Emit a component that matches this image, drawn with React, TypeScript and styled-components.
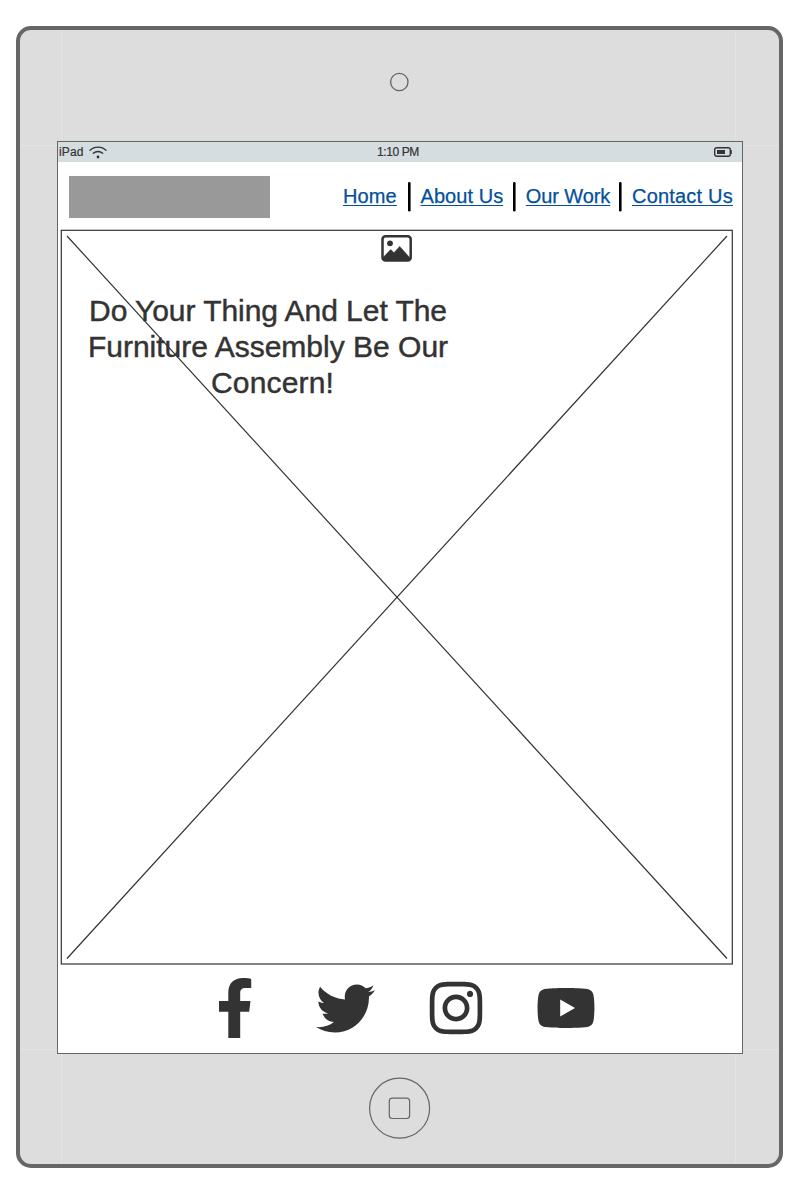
import React from "react";
import styled, { createGlobalStyle } from "styled-components";
import { FaInstagram, FaTwitter, FaYoutube } from "react-icons/fa6";

const ink = "#333333";
const bezel = "#666666";

const GlobalStyle = createGlobalStyle`
  *, *::before, *::after { box-sizing: border-box; }
  body {
    margin: 0;
    background: #ffffff;
    color: ${ink};
    font-family: "Liberation Sans", Arial, sans-serif;
  }
`;

const Page = styled.main`
  width: 798px;
  height: 1181px;
  padding: 26px 15px 0 16px;
  overflow: hidden;
`;

const seam = "linear-gradient(#e3e3e3, #e3e3e3)";

const Device = styled.div`
  display: flex;
  flex-direction: column;
  align-items: center;
  width: 767px;
  height: 1142px;
  border: 4px solid ${bezel};
  border-radius: 15px;
  background:
    ${seam} 41px 0 / 1px 100% no-repeat,
    ${seam} 715px 0 / 1px 100% no-repeat,
    ${seam} 0 115px / 100% 1px no-repeat,
    ${seam} 0 1019px / 100% 1px no-repeat,
    #dddddd;
`;

const TopBezel = styled.div`
  display: flex;
  justify-content: center;
  height: 111px;
  padding-top: 42px;
`;

const BottomBezel = styled.div`
  display: flex;
  justify-content: center;
  padding-top: 23px;
`;

const Screen = styled.div`
  flex: none;
  display: flex;
  flex-direction: column;
  width: 686px;
  height: 913px;
  margin-left: 1px;
  border: 1px solid ${bezel};
  background: #ffffff;
`;

const StatusBar = styled.div`
  display: grid;
  grid-template-columns: 1fr auto 1fr;
  align-items: center;
  height: 20px;
  padding: 0 10px 0 1px;
  background: #d6dde0;
  font-size: 12px;
  line-height: 20px;
  -webkit-text-stroke: 0.2px currentColor;
`;

const Carrier = styled.div`
  display: flex;
  align-items: center;
  gap: 5.5px;
  letter-spacing: 0.15px;
`;

const Clock = styled.time`
  margin-left: 5px;
  letter-spacing: -0.4px;
`;

const BatterySlot = styled.div`
  display: flex;
  justify-content: flex-end;
`;

const Header = styled.header`
  display: flex;
  justify-content: space-between;
  height: 67px;
  padding: 14px 9px 0 11px;
`;

const LogoPlaceholder = styled.div`
  width: 201px;
  height: 42px;
  background: #999999;
`;

const Nav = styled.nav`
  display: flex;
  height: 30px;
  margin-top: 6px;
`;

const NavLink = styled.a<{ $width: number; $spacing: number }>`
  width: ${(p) => p.$width}px;
  color: #04509a;
  font-size: 20px;
  line-height: 29px;
  letter-spacing: ${(p) => p.$spacing}px;
  white-space: nowrap;
  text-decoration: underline;
  text-decoration-thickness: 1px;
  text-underline-offset: 2px;
  text-decoration-skip-ink: none;
  -webkit-text-stroke: 0.25px currentColor;
`;

const Divider = styled.svg<{ $before: number; $after: number }>`
  flex: none;
  width: 2.6px;
  height: 30px;
  margin: 0 ${(p) => p.$after}px 0 ${(p) => p.$before}px;
  overflow: visible;
`;

const Hero = styled.section`
  position: relative;
  width: 673px;
  height: 736px;
  margin-left: 2px;
`;

const Cross = styled.svg`
  position: absolute;
  inset: 0;
`;

const ImageMark = styled.div`
  display: flex;
  justify-content: center;
  height: 64px;
  padding-top: 6px;
`;

const Headline = styled.h1`
  width: 364px;
  margin: 0 0 0 26px;
  font-size: 30px;
  font-weight: 400;
  line-height: 36px;
  text-align: center;
  -webkit-text-stroke: 0.45px currentColor;
`;

const HeadlineRow = styled.span<{ $spacing: number; $indent?: number }>`
  display: block;
  padding-left: ${(p) => p.$indent ?? 0}px;
  white-space: nowrap;
  letter-spacing: ${(p) => p.$spacing}px;
`;

const Social = styled.footer`
  display: grid;
  grid-template-columns: repeat(4, 110px);
  align-items: center;
  justify-items: center;
  height: 60px;
  margin: 13px 0 0 122.500px;
  color: ${ink};
`;

const links = [
  { label: "Home", width: 54, spacing: 0.15, before: 11, after: 10 },
  { label: "About Us", width: 82, spacing: 0.05, before: 10.7, after: 10 },
  { label: "Our Work", width: 84, spacing: -0.1, before: 9.6, after: 10 },
  { label: "Contact Us", width: 101, spacing: 0.2, before: 0, after: 0 },
];

const WifiIcon = () => (
  <svg width="18" height="13" viewBox="0 0 18 13" fill="none" stroke={ink} strokeWidth="1.3" strokeLinecap="round">
    <path d="M1 4.300C5.300 0 12.700 0 17 4.300" />
    <path d="M4.300 7.300C7 4.900 11 4.900 13.700 7.300" />
    <circle cx="9" cy="11" r="1.400" fill={ink} stroke="none" />
  </svg>
);

const BatteryIcon = () => (
  <svg width="18" height="10" viewBox="0 0 18 10">
    <rect x=".7" y=".7" width="15.600" height="8.600" rx="2" fill="none" stroke={ink} strokeWidth="1.400" />
    <rect x="3" y="3" width="8" height="4" fill={ink} />
    <rect x="16.600" y="3" width="1.200" height="4" rx=".6" fill={ink} />
  </svg>
);

const PictureIcon = () => (
  <svg width="31" height="27" viewBox="0 0 31 27">
    <rect x="1.500" y="1.300" width="28.200" height="24.200" rx="3" fill="none" stroke={ink} strokeWidth="2.500" />
    <circle cx="9" cy="8.300" r="2.900" fill={ink} />
    <path d="M2 25V22.600L9.700 14.600L13 17.800L18.700 11.400L29 23V25Z" fill={ink} stroke={ink} strokeWidth=".6" strokeLinejoin="round" />
  </svg>
);

const FacebookIcon = () => (
  <svg width="33" height="60" viewBox="0 0 33 60" fill="currentColor">
    <path d="M32.200 .9V10.100H26.900C22.300 10.100 21.200 12 21.200 15.500V23H31.500L30.200 33.800H21.200V60H9.300V33.800H0V23H9.300V14.700C9.300 5.200 15 0 24 0C28 0 31 .5 32.200 .9Z" />
  </svg>
);

const Camera = () => (
  <svg width="20" height="20" viewBox="0 0 20 20" fill="none" stroke={bezel} strokeWidth="1.300">
    <circle cx="9.300" cy="10" r="8.700" />
  </svg>
);

const HomeButton = () => (
  <svg width="62" height="62" viewBox="0 0 62 62" fill="none" stroke={bezel} strokeWidth="1.200">
    <circle cx="30.600" cy="31.200" r="30" />
    <rect x="20.300" y="21.200" width="20.300" height="20.300" rx="3" />
  </svg>
);

export default function App() {
  return (
    <>
      <GlobalStyle />
      <Page>
        <Device>
          <TopBezel>
            <Camera />
          </TopBezel>
          <Screen>
            <StatusBar>
              <Carrier>
                <span>iPad</span>
                <WifiIcon />
              </Carrier>
              <Clock>1:10 PM</Clock>
              <BatterySlot>
                <BatteryIcon />
              </BatterySlot>
            </StatusBar>
            <Header>
              <LogoPlaceholder />
              <Nav>
                {links.map((link, i) => (
                  <React.Fragment key={link.label}>
                    <NavLink href="#" $width={link.width} $spacing={link.spacing}>
                      {link.label}
                    </NavLink>
                    {i < links.length - 1 && (
                      <Divider $before={link.before} $after={link.after}>
                        <rect width="2.600" height="29.500" rx="1.200" />
                      </Divider>
                    )}
                  </React.Fragment>
                ))}
              </Nav>
            </Header>
            <Hero>
              <Cross width="673" height="736" viewBox="0 0 673 736" fill="none" stroke={ink} strokeWidth="1.200">
                <rect x="1.300" y="1.300" width="671" height="733.700" />
                <path d="M7 7 667 729.500M667 7 7 729.500" />
              </Cross>
              <ImageMark>
                <PictureIcon />
              </ImageMark>
              <Headline>
                <HeadlineRow $spacing={-0.05}>Do Your Thing And Let The</HeadlineRow>
                <HeadlineRow $spacing={0}>Furniture Assembly Be Our</HeadlineRow>
                <HeadlineRow $spacing={0.15} $indent={9}>Concern!</HeadlineRow>
              </Headline>
            </Hero>
            <Social>
              <FacebookIcon />
              <FaTwitter size={59} />
              <FaInstagram size={60} />
              <FaYoutube size={60} />
            </Social>
          </Screen>
          <BottomBezel>
            <HomeButton />
          </BottomBezel>
        </Device>
      </Page>
    </>
  );
}
